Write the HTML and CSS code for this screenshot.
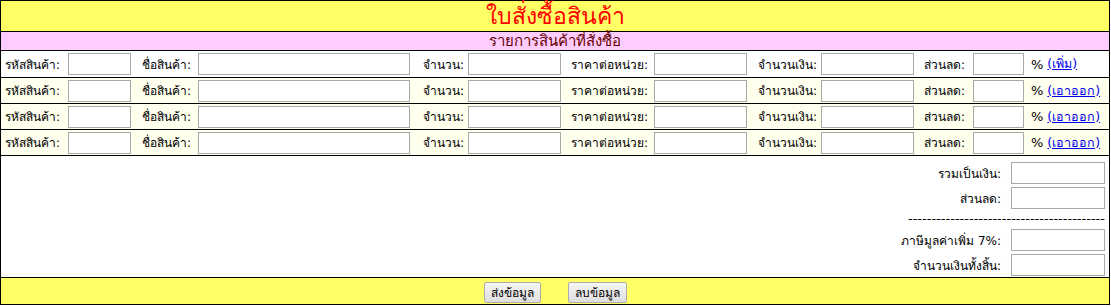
FILE: index.html
```html
<!DOCTYPE html>
<html lang="th">
<head>
<meta charset="utf-8">
<title>ใบสั่งซื้อสินค้า</title>
<link rel="stylesheet" href="styles.css">
</head>
<body>
<form class="sheet">
  <div class="title">ใบสั่งซื้อสินค้า</div>
  <div class="subtitle">รายการสินค้าที่สั่งซื้อ</div>

  <div class="item first">
    <label class="lb l1">รหัสสินค้า:</label><input class="in i1" type="text">
    <label class="lb l2">ชื่อสินค้า:</label><input class="in i2" type="text">
    <label class="lb l3">จำนวน:</label><input class="in i3" type="text">
    <label class="lb l4">ราคาต่อหน่วย:</label><input class="in i4" type="text">
    <label class="lb l5">จำนวนเงิน:</label><input class="in i5" type="text">
    <label class="lb l6">ส่วนลด:</label><input class="in i6" type="text">
    <span class="pct">%</span><a class="act" href="#">(เพิ่ม)</a>
  </div>
  <div class="item">
    <label class="lb l1">รหัสสินค้า:</label><input class="in i1" type="text">
    <label class="lb l2">ชื่อสินค้า:</label><input class="in i2" type="text">
    <label class="lb l3">จำนวน:</label><input class="in i3" type="text">
    <label class="lb l4">ราคาต่อหน่วย:</label><input class="in i4" type="text">
    <label class="lb l5">จำนวนเงิน:</label><input class="in i5" type="text">
    <label class="lb l6">ส่วนลด:</label><input class="in i6" type="text">
    <span class="pct">%</span><a class="act" href="#">(เอาออก)</a>
  </div>
  <div class="item">
    <label class="lb l1">รหัสสินค้า:</label><input class="in i1" type="text">
    <label class="lb l2">ชื่อสินค้า:</label><input class="in i2" type="text">
    <label class="lb l3">จำนวน:</label><input class="in i3" type="text">
    <label class="lb l4">ราคาต่อหน่วย:</label><input class="in i4" type="text">
    <label class="lb l5">จำนวนเงิน:</label><input class="in i5" type="text">
    <label class="lb l6">ส่วนลด:</label><input class="in i6" type="text">
    <span class="pct">%</span><a class="act" href="#">(เอาออก)</a>
  </div>
  <div class="item">
    <label class="lb l1">รหัสสินค้า:</label><input class="in i1" type="text">
    <label class="lb l2">ชื่อสินค้า:</label><input class="in i2" type="text">
    <label class="lb l3">จำนวน:</label><input class="in i3" type="text">
    <label class="lb l4">ราคาต่อหน่วย:</label><input class="in i4" type="text">
    <label class="lb l5">จำนวนเงิน:</label><input class="in i5" type="text">
    <label class="lb l6">ส่วนลด:</label><input class="in i6" type="text">
    <span class="pct">%</span><a class="act" href="#">(เอาออก)</a>
  </div>

  <div class="summary">
    <label class="sl">รวมเป็นเงิน:</label><input class="in si" type="text">
    <label class="sl">ส่วนลด:</label><input class="in si" type="text">
    <div class="dash">------------------------------------------</div>
    <label class="sl">ภาษีมูลค่าเพิ่ม 7%:</label><input class="in si" type="text">
    <label class="sl">จำนวนเงินทั้งสิ้น:</label><input class="in si" type="text">
  </div>

  <div class="footer">
    <button class="btn" type="submit">ส่งข้อมูล</button>
    <button class="btn" type="reset">ลบข้อมูล</button>
  </div>
</form>
</body>
</html>
```

FILE: styles.css
```css
body {
  margin: 0;
  font-family: Tahoma, "DejaVu Sans", "Noto Sans", sans-serif;
  font-size: 12px;
  color: #000;
}

.sheet {
  width: 1110px;
  box-sizing: border-box;
  border: 1px solid #000;
  margin: 0;
}

.title {
  height: 30px;
  line-height: 30px;
  background: #ffff66;
  color: #ff0000;
  font-size: 23px;
  text-align: center;
  border-bottom: 1px solid #000;
}

.subtitle {
  height: 18px;
  line-height: 18px;
  background: #ffccff;
  color: #660000;
  font-size: 15px;
  text-align: center;
  border-bottom: 1px solid #000;
}

.item {
  height: 25px;
  display: flex;
  align-items: center;
  padding-left: 4px;
  background: #ffffee;
  border-bottom: 1px solid #000;
}

.item.first {
  height: 26px;
  background: #ffffff;
}

.lb {
  box-sizing: border-box;
  white-space: nowrap;
}
.l1 { width: 63px; }
.l2 { width: 67px; padding-left: 11px; }
.l3 { width: 58px; padding-left: 13px; }
.l4 { width: 93px; padding-left: 10px; }
.l5 { width: 74px; padding-left: 11px; }
.l6 { width: 59px; padding-left: 10px; }

.in {
  box-sizing: border-box;
  height: 22px;
  margin: 0;
  padding: 0 2px;
  border: 1px solid #a9a9a9;
  background: #fff;
  font: inherit;
}
.i1 { width: 63px; }
.i2 { width: 212px; }
.i3 { width: 93px; }
.i4 { width: 93px; }
.i5 { width: 93px; }
.i6 { width: 51px; }

.pct {
  margin-left: 7px;
  font-size: 13px;
}
.act {
  margin-left: 4px;
  color: #0000ee;
  font-size: 12.5px;
  text-decoration: underline;
}

.summary {
  height: 122px;
  box-sizing: border-box;
  padding: 6px 4px 0 0;
  display: grid;
  grid-template-columns: auto 94px;
  justify-content: end;
  align-items: center;
  row-gap: 3px;
  grid-template-rows: 22px 22px 14px 22px 22px;
  border-bottom: 1px solid #000;
}
.sl {
  text-align: right;
  padding-right: 10px;
  white-space: nowrap;
}
.si {
  width: 94px;
}
.dash {
  grid-column: 1 / 3;
  text-align: right;
  font-size: 13px;
  line-height: 14px;
  white-space: nowrap;
}

.footer {
  height: 26px;
  background: #ffff66;
  display: flex;
  justify-content: center;
  align-items: flex-start;
  gap: 27px;
  padding-top: 4px;
  box-sizing: border-box;
}

.btn {
  height: 21px;
  padding: 0 6px;
  font: inherit;
  color: #000;
  border: 1px solid #adadad;
  border-radius: 2px;
  background: linear-gradient(#f6f6f6, #dedede);
}
```
